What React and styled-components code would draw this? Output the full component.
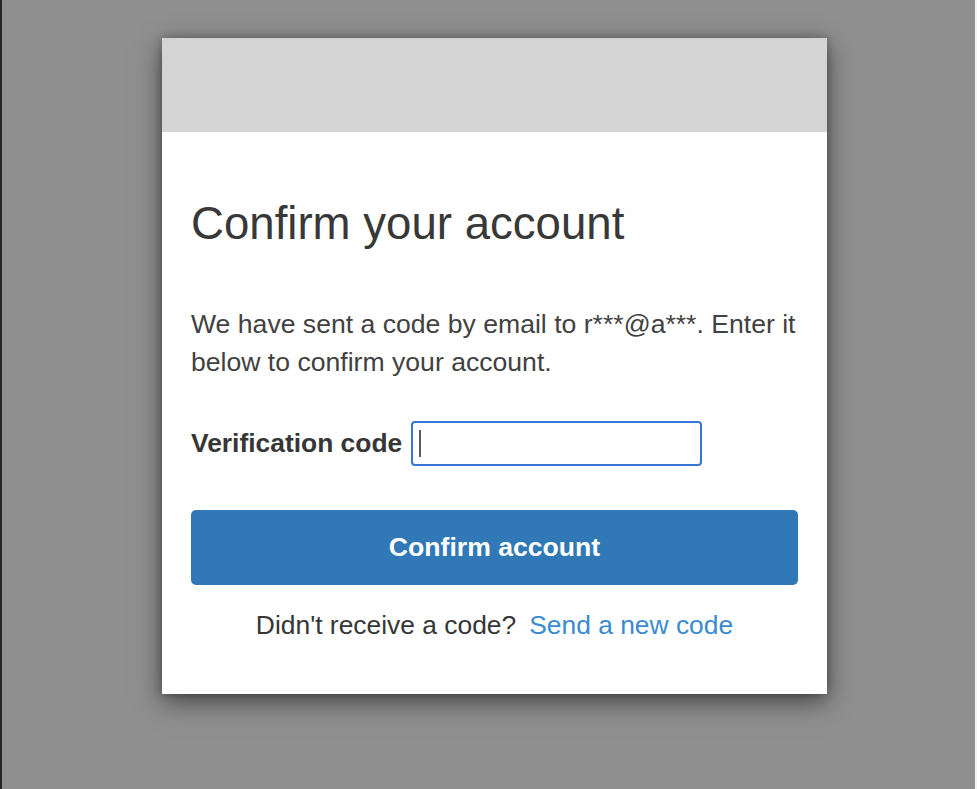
import React from "react";
import styled, { createGlobalStyle } from "styled-components";

const Global = createGlobalStyle`
  html, body { margin: 0; padding: 0; background: #8f8f8f; }
  body { font-family: "Liberation Sans", Arial, Helvetica, sans-serif; }
`;

const Page = styled.div`
  box-sizing: border-box;
  min-height: 100vh;
  background: #8f8f8f;
  border-left: 2px solid #262626;
  border-right: 2px solid #f4f4f4;
  padding: 38px 0 0 160px;
`;

const Card = styled.div`
  width: 665px;
  background: #ffffff;
  box-shadow: 0 8px 24px rgba(0, 0, 0, 0.5), 0 0 8px rgba(0, 0, 0, 0.25);
`;

const Banner = styled.div`
  height: 94px;
  background: #d4d4d4;
`;

const Body = styled.div`
  padding: 66px 29px 50px 29px;
  display: flex;
  flex-direction: column;
`;

const Title = styled.h1`
  margin: 0;
  font-size: 45.6px;
  line-height: 52px;
  font-weight: 400;
  color: #383838;
`;

const Message = styled.p`
  margin: 55px -6px 0 0;
  font-size: 26.6px;
  line-height: 38px;
  color: #414141;
`;

const FieldRow = styled.div`
  margin-top: 40px;
  display: flex;
  align-items: center;
  gap: 9px;
`;

const Label = styled.label`
  font-size: 26.4px;
  font-weight: 700;
  color: #363636;
`;

const Field = styled.div`
  box-sizing: border-box;
  width: 291px;
  height: 45px;
  border: 2px solid #3a74d4;
  border-radius: 4px;
  display: flex;
  align-items: center;
  padding-left: 6px;
  background: #fff;
`;

const Caret = styled.span`
  width: 2px;
  height: 27px;
  background: #5a5a5a;
`;

const Button = styled.button`
  margin-top: 44px;
  height: 75px;
  width: 100%;
  border: none;
  border-radius: 5px;
  background: #3178b7;
  color: #ffffff;
  font-family: inherit;
  font-size: 26.6px;
  font-weight: 700;
  cursor: pointer;
`;

const Footer = styled.div`
  margin-top: 21px;
  text-align: center;
  font-size: 26.4px;
  line-height: 38px;
  color: #363636;
`;

const Link = styled.a`
  color: #3b8bd0;
  text-decoration: none;
  margin-left: 13px;
`;

export default function App() {
  return (
    <>
      <Global />
      <Page>
        <Card>
          <Banner />
          <Body>
            <Title>Confirm your account</Title>
            <Message>
              We have sent a code by email to r***@a***. Enter it below to
              confirm your account.
            </Message>
            <FieldRow>
              <Label>Verification code</Label>
              <Field>
                <Caret />
              </Field>
            </FieldRow>
            <Button>Confirm account</Button>
            <Footer>
              Didn't receive a code?
              <Link href="#">Send a new code</Link>
            </Footer>
          </Body>
        </Card>
      </Page>
    </>
  );
}
